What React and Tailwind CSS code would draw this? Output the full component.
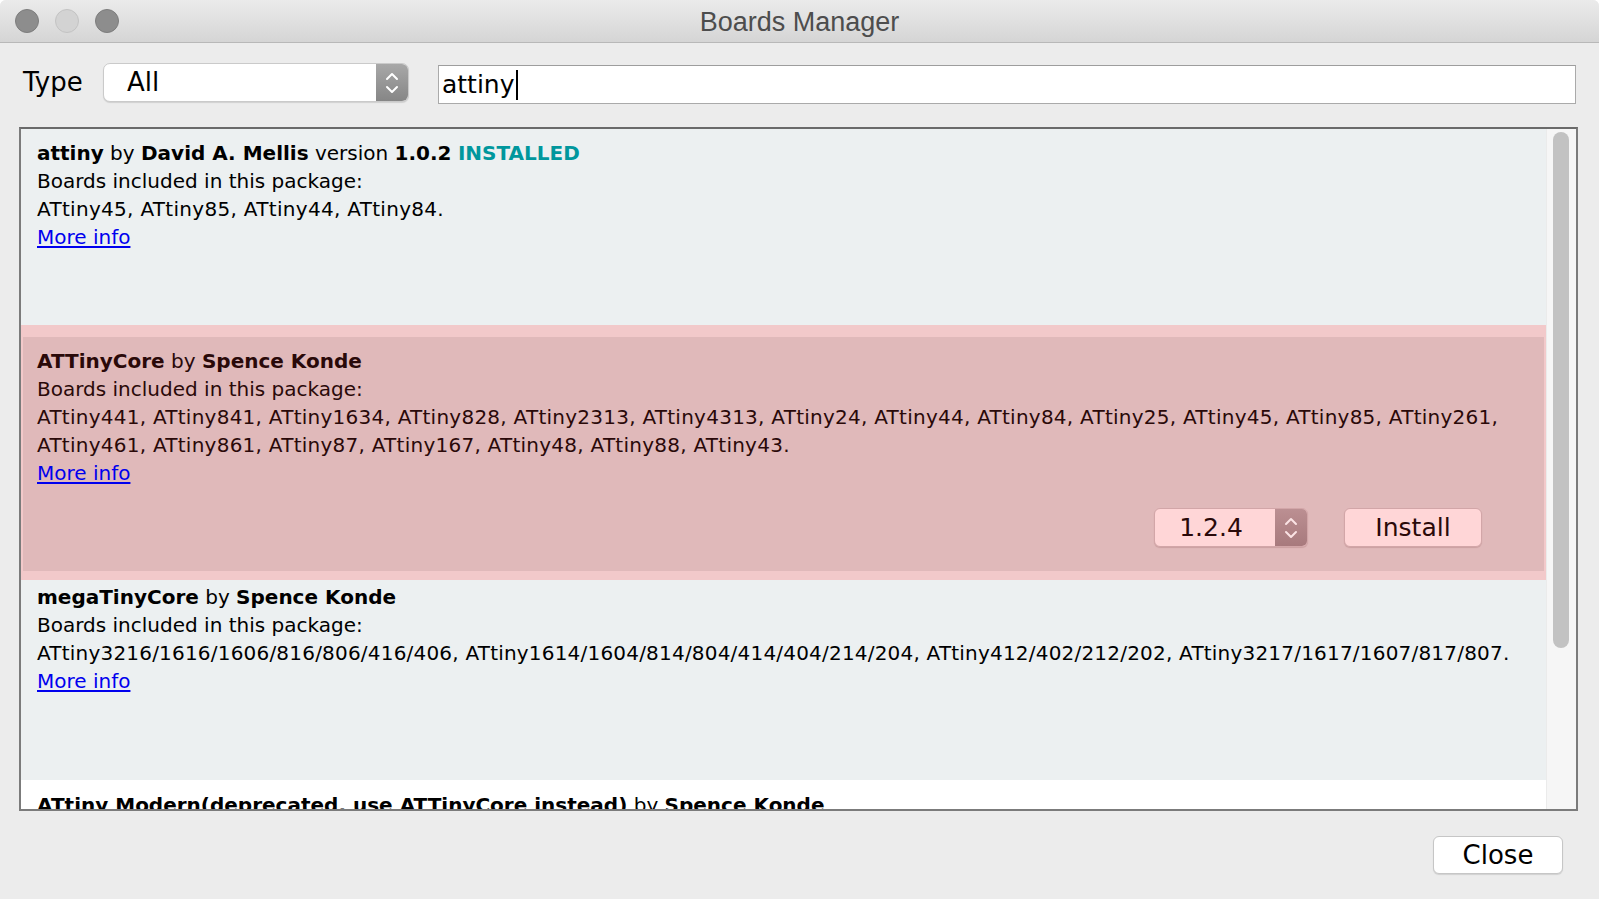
import React from 'react';

const font = { fontFamily: '"DejaVu Sans", Verdana, sans-serif' };

const Stepper = ({ className, stroke }) => (
  <div className={`flex items-center justify-center ${className}`}>
    <svg width="16" height="28" viewBox="0 0 16 28" fill="none" stroke={stroke} strokeWidth="2" strokeLinecap="round" strokeLinejoin="round">
      <path d="M3 10 L8 5 L13 10" />
      <path d="M3 18 L8 23 L13 18" />
    </svg>
  </div>
);

const MoreInfo = () => (
  <div>
    <span className="text-[#0000ee] underline underline-offset-2">More info</span>
  </div>
);

const App = () => {
  return (
    <div
      className="w-[1599px] h-[899px] bg-[#ececec] flex flex-col overflow-hidden rounded-t-[6px]"
      style={font}
    >
      {/* title bar */}
      <div className="h-[43px] shrink-0 grid grid-cols-[1fr_auto_1fr] items-center border-b border-[#b8b8b8] bg-gradient-to-b from-[#ebebeb] to-[#d5d5d5]">
        <div className="flex items-center gap-[16px] pl-[15px]">
          <span className="w-[24px] h-[24px] rounded-full bg-[#8d8d8d] border border-[#7d7d7d]" />
          <span className="w-[24px] h-[24px] rounded-full bg-[#d3d3d3] border border-[#c3c3c3]" />
          <span className="w-[24px] h-[24px] rounded-full bg-[#8d8d8d] border border-[#7d7d7d]" />
        </div>
        <div
          className="text-[27px] text-[#4d4d4d] leading-none pt-[3px]"
          style={{ fontFamily: '"Liberation Sans", Arial, sans-serif' }}
        >
          Boards Manager
        </div>
        <div />
      </div>

      {/* toolbar */}
      <div className="flex items-start pt-[20px] pl-[23px] pr-[23px] shrink-0">
        <span className="text-[26px] text-black leading-[39px] w-[80px]">Type</span>
        <div className="flex h-[39px] w-[306px] rounded-[7px] bg-white border border-[#cacaca] shadow-[0_1px_1px_rgba(0,0,0,0.12)] overflow-hidden">
          <div className="flex-1 flex items-center pl-[23px] text-[26px] text-black">All</div>
          <Stepper className="w-[32px] bg-gradient-to-b from-[#a8a8a8] to-[#868686]" stroke="#ffffff" />
        </div>
        <div className="ml-[29px] flex-1 h-[39px] mt-[2px] bg-white border border-[#aaaaaa] border-t-[#9d9d9d] flex items-center pl-[3px] text-[25px] text-black">
          <span>attiny</span>
          <span className="w-[2px] h-[30px] bg-black ml-[1px]" />
        </div>
      </div>

      {/* list */}
      <div className="mt-[23px] ml-[19px] mr-[21px] h-[684px] shrink-0 border-2 border-[#7b7b7b] border-t-[#6a6a6a] flex overflow-hidden">
        <div className="flex-1 overflow-hidden text-[20px] leading-[28px] text-black">
          {/* item 1 */}
          <div className="h-[196px] bg-[#ecf0f1] pl-[16px] pt-[10px]">
            <div className="whitespace-nowrap">
              <b>attiny</b> by <b>David A. Mellis</b> version <b>1.0.2</b>{' '}
              <b className="text-[#00979d]">INSTALLED</b>
            </div>
            <div>Boards included in this package:</div>
            <div className="tracking-[0.3px]">ATtiny45, ATtiny85, ATtiny44, ATtiny84.</div>
            <MoreInfo />
          </div>

          {/* item 2 selected */}
          <div className="h-[255px] bg-[#e0b9ba] border-t-[12px] border-b-[9px] border-x-2 border-[#f2c9ca] pl-[14px] pt-[10px] text-[#2a0909] flex flex-col">
            <div className="whitespace-nowrap">
              <b>ATTinyCore</b> by <b>Spence Konde</b>
            </div>
            <div>Boards included in this package:</div>
            <div className="whitespace-nowrap tracking-[0.25px]">
              ATtiny441, ATtiny841, ATtiny1634, ATtiny828, ATtiny2313, ATtiny4313, ATtiny24, ATtiny44, ATtiny84, ATtiny25, ATtiny45, ATtiny85, ATtiny261,
            </div>
            <div className="whitespace-nowrap tracking-[0.25px]">
              ATtiny461, ATtiny861, ATtiny87, ATtiny167, ATtiny48, ATtiny88, ATtiny43.
            </div>
            <MoreInfo />
            <div className="flex justify-end items-center gap-[36px] mt-[21px] pr-[62px]">
              <div className="flex h-[39px] w-[154px] rounded-[6px] bg-[#ffd6d7] border border-[#d2a6a8] shadow-[0_1px_1px_rgba(90,20,20,0.15)] overflow-hidden">
                <div className="flex-1 flex items-center justify-center pr-[8px] text-[25px] text-[#2a0909]">1.2.4</div>
                <Stepper className="w-[32px] bg-gradient-to-b from-[#bb8f92] to-[#a87a7d]" stroke="#fbe3e4" />
              </div>
              <div className="h-[39px] w-[138px] rounded-[6px] bg-[#ffd6d7] border border-[#d2a6a8] shadow-[0_1px_1px_rgba(90,20,20,0.15)] flex items-center justify-center text-[25px] text-[#2a0909]">
                Install
              </div>
            </div>
          </div>

          {/* item 3 */}
          <div className="h-[200px] bg-[#ecf0f1] pl-[16px] pt-[3px]">
            <div className="whitespace-nowrap">
              <b>megaTinyCore</b> by <b>Spence Konde</b>
            </div>
            <div>Boards included in this package:</div>
            <div className="whitespace-nowrap tracking-[0.2px]">
              ATtiny3216/1616/1606/816/806/416/406, ATtiny1614/1604/814/804/414/404/214/204, ATtiny412/402/212/202, ATtiny3217/1617/1607/817/807.
            </div>
            <MoreInfo />
          </div>

          {/* item 4 */}
          <div className="h-[200px] bg-white pl-[16px] pt-[11px]">
            <div className="whitespace-nowrap">
              <b>ATtiny Modern(deprecated, use ATTinyCore instead)</b> by <b>Spence Konde</b>
            </div>
          </div>
        </div>

        {/* scrollbar */}
        <div className="w-[30px] shrink-0 bg-[#f6f6f6] border-l border-[#ebebeb] pl-[6px] pt-[3px]">
          <div className="w-[16px] h-[516px] rounded-full bg-[#c2c2c2]" />
        </div>
      </div>

      {/* footer */}
      <div className="flex justify-end pt-[25px] pr-[36px]">
        <div className="h-[38px] w-[130px] rounded-[6px] bg-white border border-[#c6c6c6] shadow-[0_1px_1px_rgba(0,0,0,0.12)] flex items-center justify-center text-[26px] text-black">
          Close
        </div>
      </div>
    </div>
  );
};

export default App;
